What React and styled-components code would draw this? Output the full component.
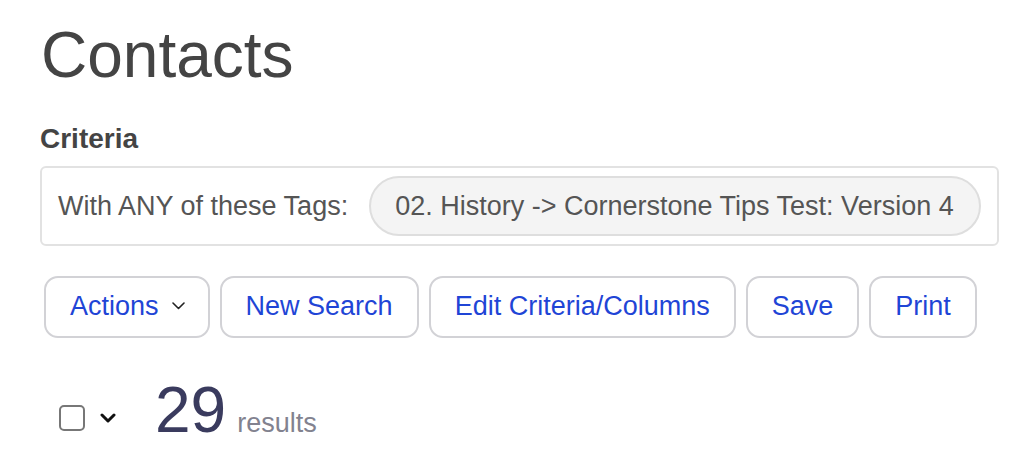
import React from 'react'
import styled, { createGlobalStyle } from 'styled-components'

const GlobalStyle = createGlobalStyle`
  html, body {
    margin: 0;
    padding: 0;
    background: #fff;
  }
  body {
    font-family: "Liberation Sans", Arial, sans-serif;
  }
`

const buttons = ['New Search', 'Edit Criteria/Columns', 'Save', 'Print']

export default function App() {
  return (
    <>
      <GlobalStyle />
      <Page>
        <Title>Contacts</Title>
        <SectionTitle>Criteria</SectionTitle>
        <CriteriaBox>
          <CriteriaLabel>With ANY of these Tags:</CriteriaLabel>
          <TagPill>02. History -&gt; Cornerstone Tips Test: Version 4</TagPill>
        </CriteriaBox>

        <Toolbar>
          <ToolButton>
            Actions
            <SmallChevron width="13" height="8" viewBox="0 0 13 8">
              <polyline points="1,1 6.5,6.5 12,1" />
            </SmallChevron>
          </ToolButton>
          {buttons.map(label => (
            <ToolButton key={label}>{label}</ToolButton>
          ))}
        </Toolbar>

        <ResultsRow>
          <Checkbox />
          <SelectChevron width="16" height="10" viewBox="0 0 16 10">
            <polyline points="2,2 8,8 14,2" />
          </SelectChevron>
          <Count>
            29<CountLabel>results</CountLabel>
          </Count>
        </ResultsRow>
      </Page>
    </>
  )
}

const Page = styled.main`
  padding: 23px 11px 0 40px;
`

const Title = styled.h1`
  margin: 0;
  padding-left: 1px;
  font-size: 64px;
  line-height: 64px;
  font-weight: 400;
  color: #444;
`

const SectionTitle = styled.h2`
  margin: 38px 0 0;
  font-size: 28px;
  line-height: 28px;
  font-weight: 700;
  color: #444;
`

const CriteriaBox = styled.div`
  margin-top: 13px;
  box-sizing: border-box;
  height: 80px;
  display: flex;
  align-items: center;
  gap: 21px;
  padding: 0 12px 0 16px;
  border: 2px solid #e2e2e2;
  border-radius: 6px;
`

const CriteriaLabel = styled.span`
  flex-shrink: 0;
  white-space: nowrap;
  font-size: 27px;
  color: #555;
`

const TagPill = styled.span`
  flex-shrink: 0;
  box-sizing: border-box;
  height: 60px;
  display: flex;
  align-items: center;
  padding: 0 25px 0 24px;
  font-size: 27px;
  color: #555;
  background: #f4f4f4;
  border: 2px solid #dedede;
  border-radius: 30px;
  white-space: nowrap;
`

const Toolbar = styled.div`
  margin-top: 30px;
  padding-left: 4px;
  display: flex;
  gap: 10px;
`

const ToolButton = styled.button`
  box-sizing: border-box;
  height: 62px;
  display: flex;
  align-items: center;
  padding: 0 24px 2px;
  font-family: inherit;
  font-size: 27px;
  color: #1f45d6;
  background: #fff;
  border: 2px solid #d2d2d6;
  border-radius: 14px;
  cursor: pointer;
`

const SmallChevron = styled.svg`
  margin-left: 13px;
  margin-right: -1px;
  fill: none;
  stroke: #222;
  stroke-width: 1.6;
  stroke-linecap: round;
  stroke-linejoin: round;
`

const ResultsRow = styled.div`
  margin-top: 40px;
  padding-left: 19px;
  display: flex;
  align-items: flex-start;
`

const Checkbox = styled.span`
  box-sizing: border-box;
  width: 26px;
  height: 26px;
  margin-top: 27px;
  border: 2px solid #777;
  border-radius: 5px;
  background: #fff;
`

const SelectChevron = styled.svg`
  margin: 35px 0 0 15px;
  fill: none;
  stroke: #111;
  stroke-width: 3;
  stroke-linecap: round;
  stroke-linejoin: round;
`

const Count = styled.div`
  margin-left: 39px;
  font-size: 64px;
  line-height: 64px;
  color: #3a3b5e;
`

const CountLabel = styled.span`
  margin-left: 11px;
  font-size: 27px;
  color: #82828f;
`
